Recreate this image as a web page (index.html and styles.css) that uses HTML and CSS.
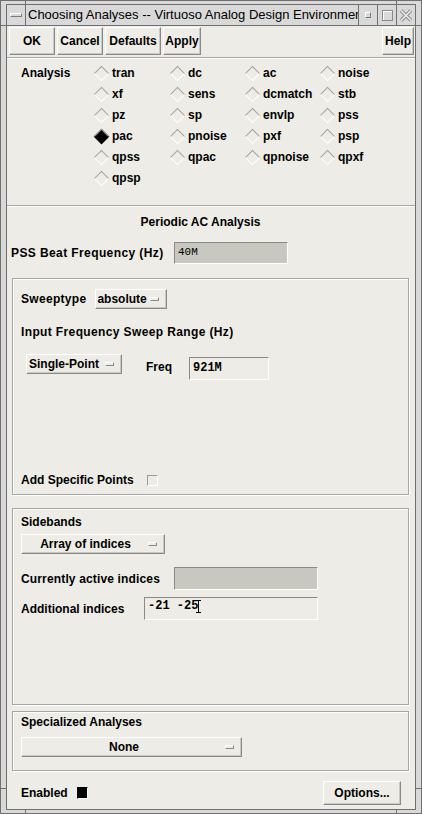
FILE: index.html
```html
<!DOCTYPE html>
<html>
<head>
<meta charset="utf-8">
<title>Choosing Analyses</title>
<link rel="stylesheet" href="styles.css">
</head>
<body>
<div class="window">
  <span class="tick tick-top tick-l"></span>
  <span class="tick tick-top tick-r"></span>
  <span class="tick tick-bot tick-l"></span>
  <span class="tick tick-bot tick-r"></span>
  <span class="tick tick-left tick-t"></span>
  <span class="tick tick-left tick-b"></span>
  <span class="tick tick-right tick-t"></span>
  <span class="tick tick-right tick-b"></span>
  <div class="inner">
    <div class="titlebar">
      <div class="tb-menu"><span class="menu-bar"></span></div>
      <div class="tb-title">Choosing Analyses -- Virtuoso Analog Design Environment</div>
      <div class="tb-btn"><span class="ico-min"></span></div>
      <div class="tb-btn"><span class="ico-max"></span></div>
      <div class="tb-btn">
        <svg class="ico-close" width="14" height="13" viewBox="0 0 14 13">
          <path d="M2 1.5 L12 11.5 M12 1.5 L2 11.5" stroke="#8e8e8e" stroke-width="3.6" fill="none"/>
          <path d="M2 1.5 L12 11.5 M12 1.5 L2 11.5" stroke="#ececec" stroke-width="1.6" fill="none"/>
        </svg>
      </div>
    </div>
    <div class="content">
      <div class="toolbar">
        <button class="btn b-ok">OK</button>
        <button class="btn b-cancel">Cancel</button>
        <button class="btn b-defaults">Defaults</button>
        <button class="btn b-apply">Apply</button>
        <button class="btn b-help">Help</button>
      </div>
      <div class="sep"></div>
      <div class="analysis">
        <div class="an-label">Analysis</div>
        <div class="radio c1"><span class="dia"></span>tran</div>
        <div class="radio"><span class="dia"></span>dc</div>
        <div class="radio"><span class="dia"></span>ac</div>
        <div class="radio"><span class="dia"></span>noise</div>
        <div class="radio c1"><span class="dia"></span>xf</div>
        <div class="radio"><span class="dia"></span>sens</div>
        <div class="radio"><span class="dia"></span>dcmatch</div>
        <div class="radio"><span class="dia"></span>stb</div>
        <div class="radio c1"><span class="dia"></span>pz</div>
        <div class="radio"><span class="dia"></span>sp</div>
        <div class="radio"><span class="dia"></span>envlp</div>
        <div class="radio"><span class="dia"></span>pss</div>
        <div class="radio c1"><span class="dia on"></span>pac</div>
        <div class="radio"><span class="dia"></span>pnoise</div>
        <div class="radio"><span class="dia"></span>pxf</div>
        <div class="radio"><span class="dia"></span>psp</div>
        <div class="radio c1"><span class="dia"></span>qpss</div>
        <div class="radio"><span class="dia"></span>qpac</div>
        <div class="radio"><span class="dia"></span>qpnoise</div>
        <div class="radio"><span class="dia"></span>qpxf</div>
        <div class="radio c1"><span class="dia"></span>qpsp</div>
      </div>
      <div class="sep sep-flush"></div>
      <div class="heading">Periodic AC Analysis</div>
      <div class="pss-row">
        <span class="pss-label">PSS Beat Frequency (Hz)</span>
        <div class="field pss-field">40M</div>
      </div>

      <div class="group sweep">
        <div class="st-row">
          <span class="st-label">Sweeptype</span>
          <div class="dd dd-st"><span class="dd-text">absolute</span><span class="ind"></span></div>
        </div>
        <div class="range-label">Input Frequency Sweep Range (Hz)</div>
        <div class="sp-row">
          <div class="dd dd-sp"><span class="dd-text">Single-Point</span><span class="ind"></span></div>
          <span class="freq-label">Freq</span>
          <div class="field freq-field">921M</div>
        </div>
        <div class="add-row">
          <span class="add-label">Add Specific Points</span>
          <span class="chk"></span>
        </div>
      </div>

      <div class="group sidebands">
        <div class="glabel">Sidebands</div>
        <div class="dd dd-wide dd-arr"><span class="dd-text">Array of indices</span><span class="ind"></span></div>
        <div class="irow irow-cur">
          <span class="cur-label">Currently active indices</span>
          <div class="field cur-field"></div>
        </div>
        <div class="irow irow-add">
          <span class="addi-label">Additional indices</span>
          <div class="field addi-field">-21 -25<svg class="caret" width="7" height="15" viewBox="0 0 7 15"><path d="M1 1.5 H6 M3.5 1.5 V13.5 M1 13.5 H6" stroke="#000" stroke-width="1" fill="none"/></svg></div>
        </div>
      </div>

      <div class="group special">
        <div class="glabel">Specialized Analyses</div>
        <div class="dd dd-wide dd-none"><span class="dd-text">None</span><span class="ind"></span></div>
      </div>

      <div class="bottom-row">
        <span>Enabled</span>
        <span class="chk chk-on"></span>
        <button class="btn b-options">Options...</button>
      </div>
    </div>
  </div>
</div>
</body>
</html>
```
FILE: styles.css
```css
* { box-sizing: border-box; }
html, body { margin: 0; padding: 0; }
body {
  font-family: "Liberation Sans", Arial, sans-serif;
  font-size: 12px;
  font-weight: bold;
  color: #000;
  background: #d9d9d9;
}

.window {
  position: relative;
  width: 422px;
  height: 814px;
  border: 1px solid #6f6f6f;
  background: #d9d9d9;
  padding: 3px 5px;
  display: flex;
}

.tick { position: absolute; background: #6f6f6f; }
.tick-top { top: 0; height: 3px; width: 1px; }
.tick-bot { bottom: 0; height: 3px; width: 1px; }
.tick-top.tick-l, .tick-bot.tick-l { left: 24px; }
.tick-top.tick-r, .tick-bot.tick-r { left: 395px; }
.tick-left { left: 0; width: 5px; height: 1px; }
.tick-right { right: 0; width: 5px; height: 1px; }
.tick-left.tick-t, .tick-right.tick-t { top: 24px; }
.tick-left.tick-b, .tick-right.tick-b { top: 787px; }

.inner {
  flex: 1;
  border: 1px solid #6f6f6f;
  display: flex;
  flex-direction: column;
  min-width: 0;
}

/* title bar */
.titlebar {
  height: 21px;
  display: flex;
  border-bottom: 1px solid #6f6f6f;
  background: #d9d9d9;
}
.tb-menu {
  width: 19px;
  border-right: 1px solid #6f6f6f;
  display: flex;
  align-items: center;
  justify-content: center;
}
.menu-bar {
  width: 12px;
  height: 4px;
  border: 1px solid;
  border-color: #fff #7a7a7a #7a7a7a #fff;
}
.tb-title {
  flex: 1;
  min-width: 0;
  padding-left: 2px;
  font-weight: normal;
  font-size: 13px;
  line-height: 20px;
  white-space: nowrap;
  overflow: hidden;
}
.tb-btn {
  width: 19px;
  border-left: 1px solid #6f6f6f;
  display: flex;
  align-items: center;
  justify-content: center;
}
.ico-min {
  width: 6px;
  height: 6px;
  border: 1px solid;
  border-color: #fff #7a7a7a #7a7a7a #fff;
}
.ico-max {
  width: 11px;
  height: 11px;
  border: 1px solid #8a8a8a;
  box-shadow: inset 1px 1px 0 #fff;
}

/* content */
.content {
  flex: 1;
  background: #edece6;
  display: flex;
  flex-direction: column;
}

.btn {
  font: inherit;
  color: #000;
  margin: 0;
  padding: 0;
  background: #edece6;
  border: 1px solid;
  border-color: #fff #8a8a8a #8a8a8a #fff;
  box-shadow: inset -1px -1px 0 #c9c8c2;
  display: flex;
  align-items: center;
  justify-content: center;
}

.toolbar {
  display: flex;
  height: 29px;
  padding: 1px 1px 0 2px;
}
.toolbar .btn { height: 28px; }
.b-ok { width: 46px; }
.b-cancel { width: 46px; margin-left: 2px; }
.b-defaults { width: 56px; margin-left: 2px; }
.b-apply { width: 38px; margin-left: 2px; }
.b-help { width: 32px; margin-left: auto; }

.sep {
  margin-top: 2px;
  border-top: 1px solid #a6a6a6;
  border-bottom: 1px solid #fff;
}
.sep-flush { margin-top: 0; }

.analysis {
  display: grid;
  grid-template-columns: 73px 76px 75px 75px 75px;
  grid-auto-rows: 21px;
  padding: 3px 0 17px 14px;
}
.an-label {
  grid-column: 1;
  grid-row: 1;
  display: flex;
  align-items: center;
}
.radio {
  display: flex;
  align-items: center;
}
.c1 { grid-column: 2; }
.dia {
  width: 13px;
  height: 13px;
  margin-right: 5px;
  position: relative;
  flex: none;
}
.dia::before {
  content: "";
  position: absolute;
  left: 2px;
  top: 2px;
  width: 9px;
  height: 9px;
  transform: rotate(45deg);
  border: 1px solid;
  border-color: #a3a3a3 #fff #fff #a3a3a3;
}
.dia.on::before {
  background: #000;
  border-color: #9a9a9a #000 #000 #9a9a9a;
}

.heading {
  margin-top: 8px;
  line-height: 14px;
  text-align: center;
  padding-right: 21px;
}

.pss-row {
  display: flex;
  align-items: center;
  margin-top: 13px;
  padding-left: 4px;
}
.pss-label { width: 163px; letter-spacing: 0.4px; }

.field {
  height: 23px;
  border: 1px solid;
  border-color: #8a8a8a #fff #fff #8a8a8a;
  background: #edece6;
  font-family: "Liberation Mono", "DejaVu Sans Mono", monospace;
  font-size: 12px;
  font-weight: bold;
  line-height: 14px;
  padding: 1px 3px;
  white-space: nowrap;
}
.pss-field {
  width: 114px;
  height: 22px;
  background: #c8c7c0;
  font-size: 11px;
  font-weight: normal;
  padding-top: 2px;
}

.group {
  margin: 0 6px 0 5px;
  border: 1px solid #a6a6a6;
  box-shadow: inset 1px 1px 0 #fff, 1px 1px 0 #fff;
  display: flex;
  flex-direction: column;
  align-items: flex-start;
}
.sweep {
  margin-top: 14px;
  height: 217px;
  padding: 10px 8px 7px 8px;
}

.dd {
  height: 20px;
  display: flex;
  align-items: center;
  background: #edece6;
  border: 1px solid;
  border-color: #fff #8a8a8a #8a8a8a #fff;
  box-shadow: inset -1px -1px 0 #c9c8c2;
  padding: 0 7px 0 1px;
}
.ind {
  width: 9px;
  height: 4px;
  border: 1px solid;
  border-color: #fff #8a8a8a #8a8a8a #fff;
  margin-left: auto;
  flex: none;
}
.st-row {
  display: flex;
  align-items: center;
}
.st-label { letter-spacing: 0.3px; }
.dd-st { width: 72px; margin-left: 9px; }
.range-label { margin-top: 16px; line-height: 14px; letter-spacing: 0.37px; }
.sp-row {
  display: flex;
  align-items: flex-start;
  margin-top: 15px;
}
.dd-sp { width: 96px; margin-left: 5px; padding-left: 2px; }
.freq-label { margin-left: 24px; margin-top: 6px; line-height: 14px; }
.freq-field { width: 80px; margin-left: 17px; margin-top: 3px; padding-top: 3px; }

.add-row {
  margin-top: auto;
  display: flex;
  align-items: center;
  line-height: 14px;
}
.add-label { width: 126px; }
.chk {
  width: 11px;
  height: 11px;
  border: 1px solid;
  border-color: #9a9a9a #fff #fff #9a9a9a;
  background: #edece6;
}
.chk-on {
  width: 11px;
  height: 12px;
  background: #000;
  border-color: #000 #fff #fff #000;
  margin-left: 9px;
}

.sidebands {
  margin-top: 13px;
  height: 197px;
  padding: 6px 8px 0 8px;
}
.glabel { line-height: 14px; }
.dd-wide .dd-text { flex: 1; text-align: center; }
.dd-arr { width: 144px; margin-top: 5px; }
.irow {
  display: flex;
  align-items: center;
}
.irow-cur { margin-top: 13px; }
.irow-add { margin-top: 7px; }
.cur-label { width: 153px; letter-spacing: 0.15px; }
.cur-field { width: 144px; background: #c8c7c0; }
.addi-label { width: 123px; }
.addi-field { width: 174px; padding-top: 1px; }
.caret { vertical-align: top; margin-left: -3px; }

.special {
  margin-top: 6px;
  height: 60px;
  padding: 3px 8px 0 8px;
}
.dd-none { width: 221px; margin-top: 8px; }

.bottom-row {
  display: flex;
  align-items: center;
  margin-top: 10px;
  padding: 0 14px;
  height: 24px;
}
.b-options { width: 78px; height: 24px; margin-left: auto; }
```
